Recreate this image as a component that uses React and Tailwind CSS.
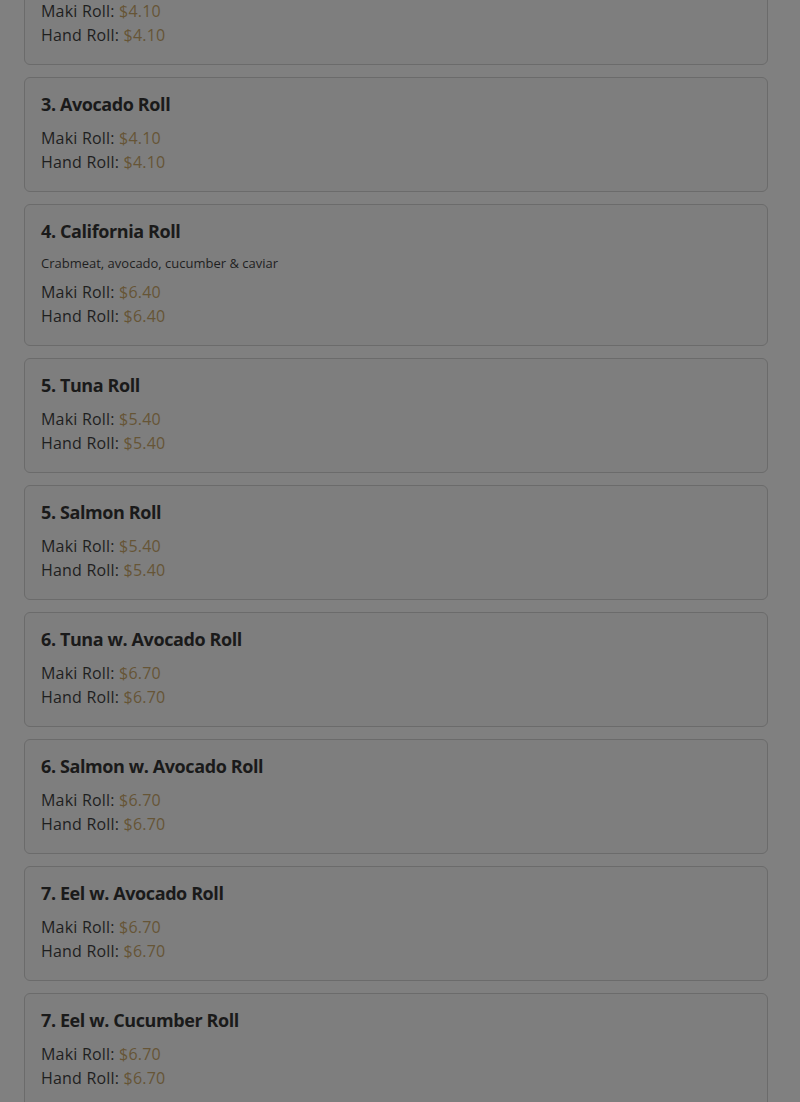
import React from "react";

const items = [
  { name: "2. Cucumber Roll", maki: "$4.10", hand: "$4.10" },
  { name: "3. Avocado Roll", maki: "$4.10", hand: "$4.10" },
  { name: "4. California Roll", desc: "Crabmeat, avocado, cucumber & caviar", maki: "$6.40", hand: "$6.40" },
  { name: "5. Tuna Roll", maki: "$5.40", hand: "$5.40" },
  { name: "5. Salmon Roll", maki: "$5.40", hand: "$5.40" },
  { name: "6. Tuna w. Avocado Roll", maki: "$6.70", hand: "$6.70" },
  { name: "6. Salmon w. Avocado Roll", maki: "$6.70", hand: "$6.70" },
  { name: "7. Eel w. Avocado Roll", maki: "$6.70", hand: "$6.70" },
  { name: "7. Eel w. Cucumber Roll", maki: "$6.70", hand: "$6.70" },
];

function Card({ item }) {
  return (
    <div className="rounded-md border border-[#6b6b6b] bg-[#7e7e7e] px-4 pt-3 pb-[17px]">
      <h3 className="mb-2 text-lg font-bold leading-7 tracking-[-0.4px] text-[#1a1a1a]">{item.name}</h3>
      {item.desc && <p className="mb-[7px] text-[13px] leading-5 text-[#1f1f1f]">{item.desc}</p>}
      <div className="text-base leading-6 tracking-[0.2px] text-[#1f1f1f]">
        <div>
          Maki Roll: <span className="text-[#665536]">{item.maki}</span>
        </div>
        <div>
          Hand Roll: <span className="text-[#665536]">{item.hand}</span>
        </div>
      </div>
    </div>
  );
}

export default function App() {
  return (
    <div
      className="h-[1102px] w-[800px] overflow-hidden bg-[#808080]"
      style={{ fontFamily: '"Open Sans", sans-serif' }}
    >
      <div className="-mt-[50px] flex flex-col gap-3 pl-6 pr-8 pb-6">
        {items.map((it) => (
          <Card key={it.name} item={it} />
        ))}
      </div>
    </div>
  );
}
